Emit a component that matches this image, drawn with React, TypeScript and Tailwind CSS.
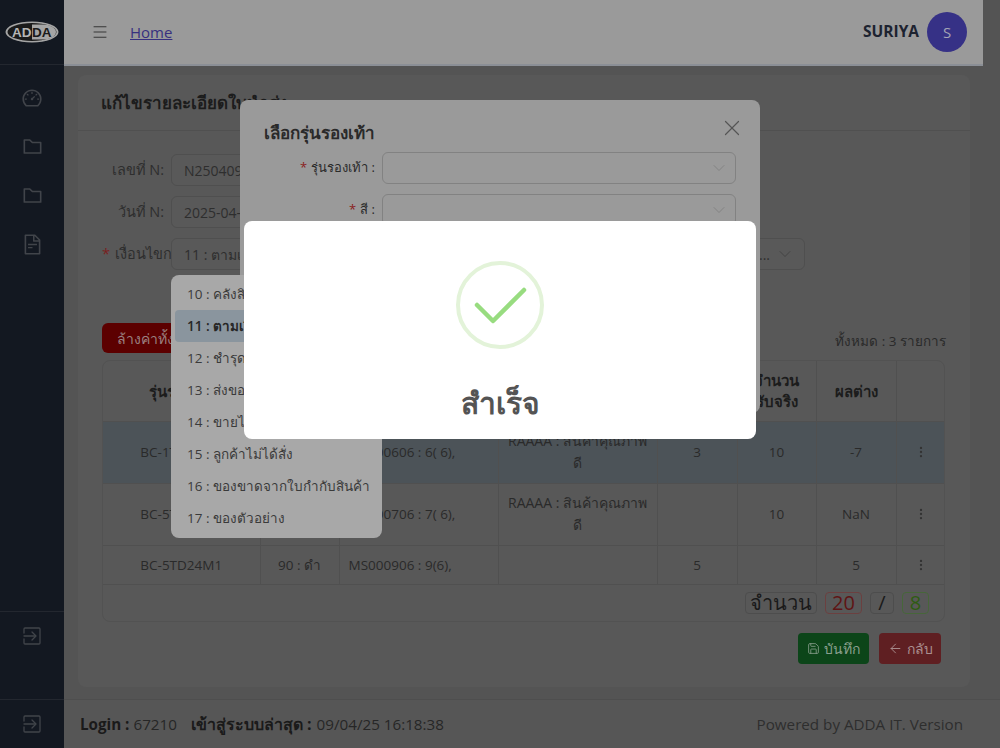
import React from 'react';
import { ChevronDown, X, ArrowLeft, Menu, MoreVertical, Save } from 'lucide-react';
import { AiOutlineDashboard, AiOutlineFolder, AiOutlineFileText } from 'react-icons/ai';

const font = { fontFamily: '"Open Sans", "Noto Sans", sans-serif' };

const rows = [
    { model: 'BC-1TD24M1', color: '70 : ดำ', size: 'MS000606 : 6( 6),', reason: ['RAAAA : สินค้าคุณภาพ', 'ดี'], qty: '3', real: '10', diff: '-7', active: true },
    { model: 'BC-5TD24M1', color: '80 : ดำ', size: 'MS000706 : 7( 6),', reason: ['RAAAA : สินค้าคุณภาพ', 'ดี'], qty: '', real: '10', diff: 'NaN', active: false },
    { model: 'BC-5TD24M1', color: '90 : ดำ', size: 'MS000906 : 9(6),', reason: [], qty: '5', real: '', diff: '5', active: false },
];

const options = [
    '10 : คลังสินค้า',
    '11 : ตามเงื่อนไข',
    '12 : ชำรุด',
    '13 : ส่งของผิด',
    '14 : ขายไม่ได้',
    '15 : ลูกค้าไม่ได้สั่ง',
    '16 : ของขาดจากใบกำกับสินค้า',
    '17 : ของตัวอย่าง',
];

const Logo = () => (
    <svg width="54" height="22" viewBox="0 0 54 22">
        <ellipse cx="27" cy="11" rx="26.5" ry="10.5" fill="#a5a5a5" />
        <ellipse cx="27" cy="11" rx="24.5" ry="9" fill="#1a1a1a" />
        <path d="M27 3.5 H38 A 13 7.5 0 0 1 38 18.5 H27 Z" fill="#a5a5a5" />
        <text x="7" y="16" fontSize="13.5" fontWeight="700" fill="#b5b5b5" fontFamily="Liberation Sans">AD</text>
        <text x="27" y="16" fontSize="13.5" fontWeight="700" fill="#1a1a1a" fontFamily="Liberation Sans">DA</text>
    </svg>
);

const ExitIcon = () => (
    <svg width="24" height="24" viewBox="0 0 24 24" fill="none" stroke="currentColor" strokeWidth="1.3" strokeLinecap="round" strokeLinejoin="round">
        <path d="M4 9V5a1 1 0 0 1 1-1h14a1 1 0 0 1 1 1v14a1 1 0 0 1-1 1H5a1 1 0 0 1-1-1v-4" />
        <path d="M4 12h11" />
        <path d="M12 8l4 4-4 4" />
    </svg>
);

const Field = ({ label, required, value }: { label: string; required?: boolean; value: string }) => (
    <div className="flex items-center h-8 mb-[10px]">
        <label className={`w-[69px] shrink-0 text-right text-[14.5px] text-[#2e2e2e] whitespace-nowrap overflow-hidden ${required ? '' : 'pr-[7px]'}`}>
            {required && <span className="text-[#7a1f1f] mr-[5px]">*</span>}
            {label}
        </label>
        <div className="h-8 w-[300px] border border-[#4f4f4f] rounded-md px-3 flex items-center text-[14px] text-[#2e2e2e] bg-[#595959] whitespace-nowrap overflow-hidden">
            {value}
        </div>
    </div>
);

const App = () => {
    return (
        <div className="relative flex w-[1000px] h-[748px] overflow-hidden bg-[#545454]" style={font}>
            {/* Sidebar */}
            <aside className="w-16 shrink-0 bg-[#131821] flex flex-col text-[#41444a]">
                <div className="h-[65px] border-b border-[#23272f] flex items-center justify-center">
                    <Logo />
                </div>
                <nav className="flex-1 flex flex-col items-center pt-[8px]">
                    <div className="h-[49px] flex items-center justify-center"><AiOutlineDashboard size={22} /></div>
                    <div className="h-[49px] flex items-center justify-center"><AiOutlineFolder size={23} /></div>
                    <div className="h-[49px] flex items-center justify-center"><AiOutlineFolder size={23} /></div>
                    <div className="h-[49px] flex items-center justify-center"><AiOutlineFileText size={23} /></div>
                </nav>
                <div className="h-[88px] border-t border-[#23272f] flex justify-center pt-[12px]"><ExitIcon /></div>
                <div className="h-[49px] border-t border-[#23272f] flex items-center justify-center"><ExitIcon /></div>
            </aside>

            {/* Main column */}
            <div className="flex-1 flex flex-col min-w-0">
                <header className="w-[919px] h-[66px] shrink-0 bg-[#9a9a9a] border-b-2 border-[#8b8f96] flex items-center pl-[27px] pr-4">
                    <Menu size={18} strokeWidth={1.3} className="text-[#333]" />
                    <a className="ml-[21px] text-[15px] text-[#37307f] underline">Home</a>
                    <div className="ml-auto flex items-center gap-2">
                        <span className="text-[15.5px] font-bold text-[#1d2330]">SURIYA</span>
                        <span className="w-10 h-10 rounded-full bg-[#363186] text-[#a5a5b5] text-[15px] flex items-center justify-center">S</span>
                    </div>
                </header>

                <main className="flex-1 min-h-0 pl-[14px] pr-[30px] pt-[9px]">
                    <section className="h-[612px] rounded-lg bg-[#585858] flex flex-col">
                        <div className="h-[56px] shrink-0 border-b border-[#505050] flex items-center px-[23px]">
                            <h2 className="text-[17px] font-bold text-[#1c1c1c]">แก้ไขรายละเอียดใบนำส่ง</h2>
                        </div>
                        <div className="px-6 pt-[23px] flex-1 min-h-0">
                            <Field label="เลขที่ N:" value="N250409001" />
                            <Field label="วันที่ N:" value="2025-04-09" />
                            <div className="flex gap-2">
                                <Field label="เงื่อนไขการ" required value="11 : ตามเงื่อนไข" />
                                <div className="ml-auto mr-[141px] h-8 w-[300px] border border-[#4f4f4f] rounded-md flex items-center justify-end pr-[9px] text-[14px] text-[#2e2e2e] bg-[#595959]">
                                    <span className="mr-[5px]">(...</span>
                                    <ChevronDown size={20} strokeWidth={1} className="text-[#404040]" />
                                </div>
                            </div>

                            <div className="mt-[43px] flex items-end justify-between">
                                <button className="h-[30px] px-[15px] rounded-md bg-[#5c0000] text-[14px] text-[#9a8080] whitespace-nowrap">ล้างค่าทั้งหมด</button>
                                <span className="text-[13.5px] leading-[24px] text-[#2a2a2a]">ทั้งหมด : 3 รายการ</span>
                            </div>

                            <div className="mt-[7px] w-[843px] border border-[#525252] rounded-lg overflow-hidden">
                                <table className="w-full table-fixed border-collapse text-[13.5px] text-[#2a2a2a]">
                                    <colgroup>
                                        <col className="w-[157px]" />
                                        <col className="w-[79px]" />
                                        <col className="w-[159px]" />
                                        <col className="w-[159px]" />
                                        <col className="w-[80px]" />
                                        <col className="w-[79px]" />
                                        <col className="w-[80px]" />
                                        <col className="w-[49px]" />
                                    </colgroup>
                                    <thead>
                                        <tr className="h-[60px] text-[15px] font-bold text-[#1c1c1c]">
                                            <th className="border-r border-[#505050]">รุ่นรองเท้า</th>
                                            <th className="border-r border-[#505050]">สี</th>
                                            <th className="border-r border-[#505050]">ไซส์</th>
                                            <th className="border-r border-[#505050]">เหตุผล</th>
                                            <th className="border-r border-[#505050]">จำนวน</th>
                                            <th className="border-r border-[#505050] leading-[21px]">จำนวน<br />รับจริง</th>
                                            <th className="border-r border-[#505050]">ผลต่าง</th>
                                            <th></th>
                                        </tr>
                                    </thead>
                                    <tbody>
                                        {rows.map((r) => (
                                            <tr key={r.size} className={`border-t border-[#505050] ${r.active ? 'bg-[#4c5358]' : ''} ${r.reason.length ? 'h-[62px]' : 'h-[39px]'}`}>
                                                <td className="text-center border-r border-[#505050]">{r.model}</td>
                                                <td className="text-center border-r border-[#505050]">{r.color}</td>
                                                <td className="px-[9px] border-r border-[#505050]">{r.size}</td>
                                                <td className="text-center text-[14px] leading-[22px] whitespace-nowrap border-r border-[#505050]">
                                                    {r.reason.map((line) => (
                                                        <div key={line}>{line}</div>
                                                    ))}
                                                </td>
                                                <td className="text-center border-r border-[#505050]">{r.qty}</td>
                                                <td className="text-center border-r border-[#505050]">{r.real}</td>
                                                <td className="text-center border-r border-[#505050]">{r.diff}</td>
                                                <td><MoreVertical size={14} className="mx-auto text-[#333]" /></td>
                                            </tr>
                                        ))}
                                    </tbody>
                                </table>
                                <div className="h-[37px] border-t border-[#505050] flex items-center justify-end gap-2 pr-[15px] text-[20px] leading-none">
                                    <span className="h-[22px] w-[72px] flex items-center justify-center rounded border border-[#4d4d4d] text-[#1a1a1a] font-medium">จำนวน</span>
                                    <span className="h-[22px] w-[37px] flex items-center justify-center rounded border border-[#6b4040] text-[#5f1414]">20</span>
                                    <span className="h-[22px] w-[24px] flex items-center justify-center rounded border border-[#4d4d4d] text-[#1a1a1a]">/</span>
                                    <span className="h-[22px] w-[27px] flex items-center justify-center rounded border border-[#47663a] text-[#2e5c12]">8</span>
                                </div>
                            </div>

                            <div className="mt-[11px] w-[839px] flex justify-end gap-[10px]">
                                <button className="h-[31px] w-[71px] rounded bg-[#0c4519] text-[#8ba08f] text-[14px] font-medium flex items-center justify-center gap-1">
                                    <Save size={13} strokeWidth={1.5} />บันทึก
                                </button>
                                <button className="h-[31px] w-[62px] rounded bg-[#5f1f22] text-[#ab8f90] text-[14px] font-medium flex items-center justify-center gap-1">
                                    <ArrowLeft size={15} strokeWidth={1.5} />กลับ
                                </button>
                            </div>
                        </div>
                    </section>
                </main>

                <footer className="h-[49px] shrink-0 border-t border-[#4e4e4e] bg-[#565656] flex items-center justify-between pl-4 pr-[37px] text-[15.2px] text-[#262626]">
                    <div className="flex items-center whitespace-nowrap">
                        <b className="text-[#1a1a1a] mr-1">Login :</b> 67210
                        <b className="ml-[14px] mr-[5px] text-[16px] text-[#1a1a1a]">เข้าสู่ระบบล่าสุด :</b> 09/04/25 16:18:38
                    </div>
                    <span className="text-[#2e2e2e]">Powered by ADDA IT. Version</span>
                </footer>
            </div>

            {/* Model picker dialog, behind the success dialog */}
            <div className="absolute left-[240px] top-[100px] w-[520px] h-[313px] rounded-lg bg-[#9a9a9a] text-[#2a2a2a]">
                <h3 className="absolute left-6 top-[20px] text-[17px] font-semibold">เลือกรุ่นรองเท้า</h3>
                <X size={26} strokeWidth={1.1} className="absolute right-[15px] top-[15px] text-[#555]" />
                <div className="absolute left-0 right-6 top-[52px] flex flex-col gap-[10px]">
                    {['รุ่นรองเท้า', 'สี'].map((label) => (
                        <div key={label} className="flex items-center">
                            <label className="w-[135px] text-right text-[13px]">
                                <span className="text-[#8a2020] mr-1">*</span>{label} :
                            </label>
                            <div className="ml-[7px] flex-1 h-8 border border-[#828282] rounded-md flex items-center justify-end pr-[6px]">
                                <ChevronDown size={20} strokeWidth={1} className="text-[#7e7e7e]" />
                            </div>
                        </div>
                    ))}
                </div>
            </div>

            {/* Open select menu */}
            <ul className="absolute left-[171px] top-[275px] w-[211px] h-[263px] rounded-lg bg-[#a8a8a8] px-1 pt-[3px] text-[13.5px] text-[#3a3a3a]">
                {options.map((o) => (
                    <li key={o} className={`h-8 px-3 flex items-center whitespace-nowrap rounded ${o.startsWith('11') ? 'bg-[#8a959e] font-semibold text-[#262626]' : ''}`}>
                        {o}
                    </li>
                ))}
            </ul>

            {/* Success dialog */}
            <div className="absolute left-[244px] top-[221px] w-[512px] h-[218px] rounded-lg bg-white flex flex-col items-center pt-10">
                <div className="w-[88px] h-[88px] rounded-full border-4 border-[#e3f3d9] flex items-center justify-center">
                    <svg width="54" height="40" viewBox="0 0 54 40" fill="none">
                        <path d="M4 20 L20 36 L51 5" stroke="#98dc80" strokeWidth="4.5" strokeLinecap="round" strokeLinejoin="round" />
                    </svg>
                </div>
                <h2 className="mt-8 text-[30px] font-bold text-[#545454] leading-[44px]">สำเร็จ</h2>
            </div>
        </div>
    );
};

export default App;
